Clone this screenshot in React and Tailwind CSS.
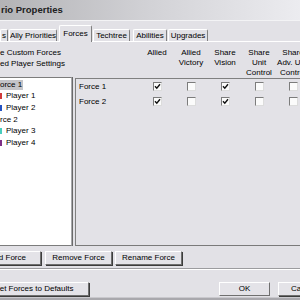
import React from 'react';

const COLUMNS = [
  ['Allied'],
  ['Allied', 'Victory'],
  ['Share', 'Vision'],
  ['Share', 'Unit', 'Control'],
  ['Share', 'Adv. Unit', 'Control'],
];

const FORCES = [
  { name: 'Force 1', checks: [true, false, true, false, false] },
  { name: 'Force 2', checks: [true, false, true, false, false] },
];

const TREE = [
  { label: 'orce 1', force: true, selected: true },
  { label: 'Player 1', color: 'bg-[#d03a3a]' },
  { label: 'Player 2', color: 'bg-[#2352c2]' },
  { label: 'rce 2', force: true },
  { label: 'Player 3', color: 'bg-[#48cdbd]' },
  { label: 'Player 4', color: 'bg-[#7e2f86]' },
];

function Check({ on }) {
  return (
    <div className="w-[9px] h-[9px] bg-[#fbfbfb] border-t border-l border-[#7c7c7c] border-b border-r border-b-[#dcdcdc] border-r-[#dcdcdc] flex items-center justify-center">
      {on && (
        <svg width="7" height="7" viewBox="0 0 7 7">
          <path d="M1 3.2 L2.8 5.2 L6 1.2" stroke="#111" strokeWidth="1.4" fill="none" />
        </svg>
      )}
    </div>
  );
}

function Btn({ children, className = '' }) {
  return (
    <div
      className={
        'h-[14px] shrink-0 flex items-center justify-center whitespace-nowrap bg-[#e4e3e8] border-t border-l border-white border-b border-r border-b-[#6f6f6f] border-r-[#6f6f6f] shadow-[1px_1px_0_#3c3c3c] ' +
        className
      }
    >
      {children}
    </div>
  );
}

function Tab({ children, selected, className = '' }) {
  return (
    <div
      className={
        'shrink-0 flex items-center justify-center whitespace-nowrap border-t border-l border-white border-r border-r-[#808080] rounded-t-[2px] bg-[#e2e1e6] ' +
        (selected ? 'h-[17px] -mb-[1px] relative z-10 pb-[1px]' : 'h-[12px]') +
        ' ' +
        className
      }
    >
      {children}
    </div>
  );
}

export default function App() {
  return (
    <div className="w-[300px] h-[300px] overflow-hidden bg-[#e2e1e6] text-black text-[8px] leading-none font-['Liberation_Sans',Arial,sans-serif] flex flex-col">
      {/* title bar */}
      <div className="h-[21px] shrink-0 bg-linear-to-r from-[#b3b3b6] via-[#d2d2d6] to-[#ececf0] border-b border-[#f3f3f5] flex items-center pl-[1px] text-[9.5px] font-bold text-[#202020]">
        rio Properties
      </div>

      {/* tabs */}
      <div className="h-[20px] shrink-0 flex items-end">
        <Tab className="w-[8px] justify-start pl-[1px]">s</Tab>
        <Tab className="ml-[1px] w-[48px]">Ally Priorities</Tab>
        <Tab selected className="ml-[2px] w-[33px]">Forces</Tab>
        <Tab className="ml-[1px] w-[37px]">Techtree</Tab>
        <Tab className="ml-[3px] w-[34px]">Abilities</Tab>
        <Tab className="ml-[1px] w-[40px]">Upgrades</Tab>
      </div>

      <div className="flex-1 flex flex-col border-t border-white">
        {/* options + column headers */}
        <div className="h-[35px] shrink-0 flex">
          <div className="w-[140px] shrink-0 pt-[6px] leading-[10.5px] whitespace-nowrap">
            <div>e Custom Forces</div>
            <div>ed Player Settings</div>
          </div>
          {COLUMNS.map((lines, i) => (
            <div key={i} className="w-[34px] shrink-0 pt-[6px] leading-[10px] text-center whitespace-nowrap flex flex-col items-center">
              {lines.map((l) => (
                <div key={l}>{l}</div>
              ))}
            </div>
          ))}
        </div>

        {/* tree + force grid */}
        <div className="h-[169px] shrink-0 flex">
          <div className="-ml-[2px] w-[74px] shrink-0 bg-white border border-[#7c7c7c] border-r-[#a8a8ac] shadow-[1px_0_0_#6a6a6a] pt-[1px]">
            {TREE.map((t) => (
              <div key={t.label} className="h-[11.6px] flex items-center whitespace-nowrap">
                {t.force ? (
                  <span className={'pl-[1px] pr-[1px] h-[10px] flex items-center ' + (t.selected ? 'bg-[#c4c4c8]' : '')}>
                    {t.label}
                  </span>
                ) : (
                  <>
                    <span className={'-ml-[3px] w-[6px] h-[6px] ' + t.color} />
                    <span className="ml-[4px]">{t.label}</span>
                  </>
                )}
              </div>
            ))}
          </div>

          <div className="ml-[3px] mt-[1px] flex-1 border-t border-l border-[#808080] border-b border-b-[#7a7a7a] bg-[#e3e2e7]">
            {FORCES.map((f) => (
              <div key={f.name} className="h-[15px] flex items-center">
                <div className="w-[64px] shrink-0 pl-[3px] whitespace-nowrap">{f.name}</div>
                {f.checks.map((c, i) => (
                  <div key={i} className="w-[34px] shrink-0 flex justify-center">
                    <Check on={c} />
                  </div>
                ))}
              </div>
            ))}
          </div>
        </div>

        {/* force buttons */}
        <div className="mt-[5px] flex">
          <Btn className="-ml-[26px] w-[67px]">Add Force</Btn>
          <Btn className="ml-[4px] w-[67px]">Remove Force</Btn>
          <Btn className="ml-[3px] w-[67px]">Rename Force</Btn>
        </div>

        <div className="mt-[3px] h-[2px] shrink-0 border-t border-[#9c9c9f] border-b border-b-white" />

        {/* dialog buttons */}
        <div className="mt-[12px] flex">
          <Btn className="-ml-[30px] w-[119px]">Reset Forces to Defaults</Btn>
          <Btn className="ml-[130px] w-[51px] border border-[#1e1e1e] shadow-none">OK</Btn>
          <Btn className="ml-[8px] w-[51px]">Cancel</Btn>
        </div>

        <div className="mt-auto h-[3px] shrink-0 bg-[#a9a8ad] border-t border-[#c9c8cd]" />
      </div>
    </div>
  );
}
